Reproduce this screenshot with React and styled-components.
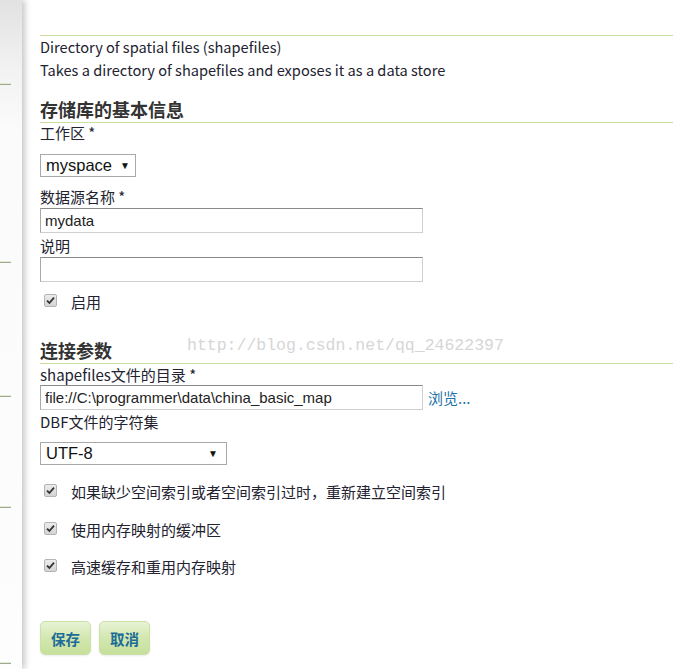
import React from 'react';
import styled, { createGlobalStyle } from 'styled-components';

const GlobalStyle = createGlobalStyle`
  html, body {
    margin: 0;
    padding: 0;
    background: #fff;
  }
  body {
    font-family: "Noto Sans CJK SC", sans-serif;
    color: #222230;
  }
`;

const Page = styled.div`
  display: flex;
  width: 673px;
  height: 669px;
  overflow: hidden;
  position: relative;
  background: #fff;
`;

const Sidebar = styled.div`
  width: 22px;
  flex-shrink: 0;
  display: flex;
  flex-direction: column;
  background: linear-gradient(to bottom, #e2e2e2 0px, #f2f2f2 70px, #fbfbfb 130px, #fdfdfd 100%);
  box-shadow: 3px 0 6px rgba(0, 0, 0, 0.22);
  position: relative;
  z-index: 1;
`;

const MenuItem = styled.div`
  height: ${(p) => p.$h}px;
  flex-shrink: 0;
  display: flex;
  align-items: flex-end;
`;

const MenuRule = styled.div`
  width: 11px;
  height: 2px;
  background: linear-gradient(to bottom, #e2ecd2 50%, #9fa98f 50%);
`;

const Main = styled.div`
  flex: 1;
  padding-left: 18px;
  display: flex;
  flex-direction: column;
`;

const TopRule = styled.div`
  margin-top: 35px;
  height: 1px;
  background: #c8dfa0;
`;

const Desc = styled.p`
  margin: 0;
  font-size: 14.6px;
  line-height: 23px;
  white-space: nowrap;
  position: relative;
  top: -1px;
`;

const SectionTitle = styled.h2`
  margin: ${(p) => p.$top}px 0 0;
  font-size: 18px;
  font-weight: 700;
  line-height: 26px;
  color: #333;
  border-bottom: 1px solid #c8dfa0;
`;

const Label = styled.div`
  margin-top: ${(p) => p.$top || 0}px;
  font-size: 15px;
  line-height: 20px;
  color: #222230;
  white-space: nowrap;
`;

const Select = styled.div`
  margin-top: ${(p) => p.$top}px;
  width: ${(p) => p.$w}px;
  height: 23px;
  box-sizing: border-box;
  border: 1px solid #a9a9a9;
  display: flex;
  align-items: center;
  justify-content: space-between;
  padding: 0 8px 0 5px;
  font-family: "Liberation Sans", Arial, sans-serif;
  font-size: 16.5px;
  color: #111;
  ${(p) => p.$gap && `justify-content: flex-start; gap: ${p.$gap}px;`}
`;

const Arrow = styled.span`
  font-size: 10px;
  line-height: 1;
`;

const InputRow = styled.div`
  margin-top: ${(p) => p.$top}px;
  display: flex;
  align-items: center;
  gap: 5px;
`;

const Input = styled.div`
  width: 383px;
  height: 25px;
  box-sizing: border-box;
  border: 1px solid #cfcfcf;
  border-top-color: #8a8a8a;
  border-left-color: #a9a9a9;
  padding: 0 4px;
  display: flex;
  align-items: center;
  font-family: "Liberation Sans", Arial, sans-serif;
  font-size: 15px;
  color: #222;
  white-space: nowrap;
  overflow: hidden;
`;

const BrowseLink = styled.a`
  font-size: 15px;
  color: #1e73a6;
  text-decoration: none;
`;

const CheckRow = styled.label`
  margin-top: ${(p) => p.$top}px;
  height: 24px;
  flex-shrink: 0;
  display: flex;
  align-items: center;
  padding-left: 4px;
  gap: 14px;
  font-size: 15px;
  line-height: 24px;
  color: #222230;
`;

const Box = styled.span`
  width: 13px;
  height: 13px;
  box-sizing: border-box;
  border: 1px solid #b4b4b4;
  border-radius: 2px;
  background: linear-gradient(to bottom, #ececec, #d4d4d4);
  display: flex;
  align-items: center;
  justify-content: center;
  margin-top: -4px;
`;

const Buttons = styled.div`
  margin-top: 42px;
  display: flex;
  gap: 8px;
`;

const Button = styled.button`
  width: 51px;
  height: 34px;
  border: 1px solid #cbe0a6;
  border-radius: 5px;
  background: linear-gradient(to bottom, #e8f3d6 0%, #d4e8b2 45%, #c6e09b 100%);
  color: #1d6c98;
  font-weight: 700;
  font-size: 14.5px;
  font-family: "Noto Sans CJK SC", sans-serif;
  padding: 0;
  box-shadow: 0 1px 2px rgba(0, 0, 0, 0.08);
`;

const Watermark = styled.div`
  position: absolute;
  left: 187px;
  top: 336px;
  font-family: "Liberation Mono", monospace;
  font-size: 16.5px;
  color: #d6d6d6;
  pointer-events: none;
`;

const Check = () => (
  <Box>
    <svg width="9" height="9" viewBox="0 0 9 9">
      <path d="M1 4.6 L3.4 7 L8 1.6" fill="none" stroke="#333" strokeWidth="1.8" />
    </svg>
  </Box>
);

const menu = [85, 178, 134, 111, 156];

export default function App() {
  return (
    <Page>
      <GlobalStyle />
      <Sidebar>
        {menu.map((h, i) => (
          <MenuItem key={i} $h={h}>
            <MenuRule />
          </MenuItem>
        ))}
      </Sidebar>
      <Main>
        <TopRule />
        <Desc>Directory of spatial files (shapefiles)</Desc>
        <Desc>Takes a directory of shapefiles and exposes it as a data store</Desc>

        <SectionTitle $top={14}>存储库的基本信息</SectionTitle>
        <Label>工作区 *</Label>
        <Select $top={11} $w={96} $gap={8}>
          myspace <Arrow>▼</Arrow>
        </Select>
        <Label $top={10}>数据源名称 *</Label>
        <InputRow $top={1}>
          <Input>mydata</Input>
        </InputRow>
        <Label $top={3}>说明</Label>
        <InputRow $top={1}>
          <Input />
        </InputRow>
        <CheckRow $top={8}>
          <Check />
          启用
        </CheckRow>

        <SectionTitle $top={23}>连接参数</SectionTitle>
        <Label $top={1}>shapefiles文件的目录 *</Label>
        <InputRow $top={0}>
          <Input>file://C:\programmer\data\china_basic_map</Input>
          <BrowseLink href="#">浏览...</BrowseLink>
        </InputRow>
        <Label $top={2}>DBF文件的字符集</Label>
        <Select $top={10} $w={187}>
          UTF-8 <Arrow>▼</Arrow>
        </Select>
        <CheckRow $top={15}>
          <Check />
          如果缺少空间索引或者空间索引过时，重新建立空间索引
        </CheckRow>
        <CheckRow $top={14}>
          <Check />
          使用内存映射的缓冲区
        </CheckRow>
        <CheckRow $top={13}>
          <Check />
          高速缓存和重用内存映射
        </CheckRow>

        <Buttons>
          <Button>保存</Button>
          <Button>取消</Button>
        </Buttons>
      </Main>
      <Watermark>http://blog.csdn.net/qq_24622397</Watermark>
    </Page>
  );
}
